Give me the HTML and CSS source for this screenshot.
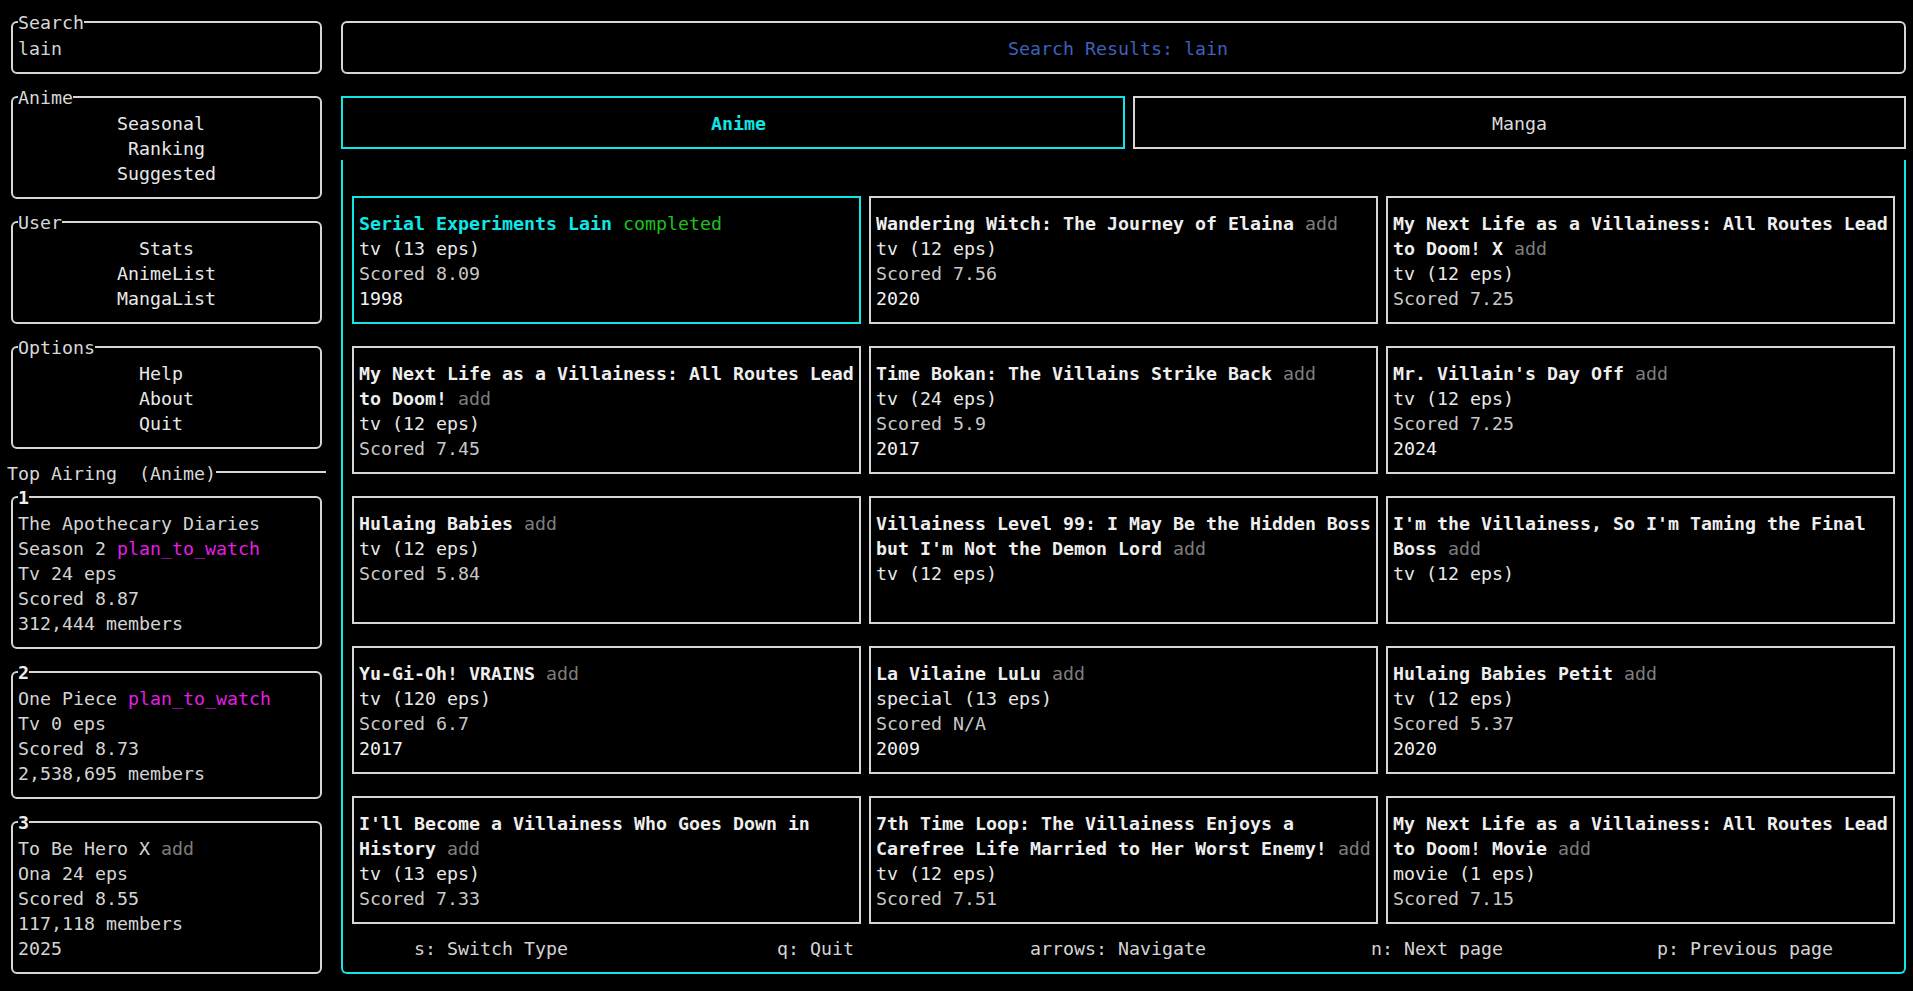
FILE: index.html
```html
<!DOCTYPE html>
<html lang="en">
<head>
<meta charset="utf-8">
<title>Search Results: lain</title>
<link rel="stylesheet" href="styles.css">
</head>
<body>
<div class="term">
  <aside class="side">
    <section class="box round">
      <span class="ttl">Search</span>
      <div class="ln">lain</div>
    </section>
    <section class="box round">
      <span class="ttl">Anime</span>
      <div class="menu"><div>Seasonal </div><div>Ranking</div><div>Suggested</div></div>
    </section>
    <section class="box round">
      <span class="ttl">User</span>
      <div class="menu"><div>Stats</div><div>AnimeList</div><div>MangaList</div></div>
    </section>
    <section class="box round">
      <span class="ttl">Options</span>
      <div class="menu"><div>Help </div><div>About</div><div>Quit </div></div>
    </section>
    <div class="sep"><span class="sep-text">Top Airing  (Anime)</span><i class="rule"></i></div>
    <section class="box round air">
      <span class="ttl b">1</span>
      <div class="ln">The Apothecary Diaries</div>
      <div class="ln">Season 2 <span class="pink">plan_to_watch</span></div>
      <div class="ln">Tv 24 eps</div>
      <div class="ln">Scored 8.87</div>
      <div class="ln">312,444 members</div>
    </section>
    <section class="box round air">
      <span class="ttl b">2</span>
      <div class="ln">One Piece <span class="pink">plan_to_watch</span></div>
      <div class="ln">Tv 0 eps</div>
      <div class="ln">Scored 8.73</div>
      <div class="ln">2,538,695 members</div>
    </section>
    <section class="box round air">
      <span class="ttl b">3</span>
      <div class="ln">To Be Hero X <span class="add">add</span></div>
      <div class="ln">Ona 24 eps</div>
      <div class="ln">Scored 8.55</div>
      <div class="ln">117,118 members</div>
      <div class="ln">2025</div>
    </section>
  </aside>

  <main class="mainc">
    <header class="box round head">
      <div class="center blue">Search Results: lain </div>
    </header>
    <nav class="tabs">
      <div class="box tab tab-anime active"> Anime</div>
      <div class="box tab tab-manga">Manga</div>
    </nav>
    <section class="panel">
      <div class="cards">
        <article class="box card sel"><div class="body">
          <div class="ln"><span class="t">Serial Experiments Lain</span> <span class="done">completed</span></div>
          <div class="ln ty">tv (13 eps)</div>
          <div class="ln sc">Scored 8.09</div>
          <div class="ln yr">1998</div>
        </div></article>
        <article class="box card"><div class="body">
          <div class="ln"><span class="t">Wandering Witch: The Journey of Elaina</span> <span class="add">add</span></div>
          <div class="ln ty">tv (12 eps)</div>
          <div class="ln sc">Scored 7.56</div>
          <div class="ln yr">2020</div>
        </div></article>
        <article class="box card"><div class="body">
          <div class="ln t">My Next Life as a Villainess: All Routes Lead</div>
          <div class="ln"><span class="t">to Doom! X</span> <span class="add">add</span></div>
          <div class="ln ty">tv (12 eps)</div>
          <div class="ln sc">Scored 7.25</div>
        </div></article>

        <article class="box card"><div class="body">
          <div class="ln t">My Next Life as a Villainess: All Routes Lead</div>
          <div class="ln"><span class="t">to Doom!</span> <span class="add">add</span></div>
          <div class="ln ty">tv (12 eps)</div>
          <div class="ln sc">Scored 7.45</div>
        </div></article>
        <article class="box card"><div class="body">
          <div class="ln"><span class="t">Time Bokan: The Villains Strike Back</span> <span class="add">add</span></div>
          <div class="ln ty">tv (24 eps)</div>
          <div class="ln sc">Scored 5.9</div>
          <div class="ln yr">2017</div>
        </div></article>
        <article class="box card"><div class="body">
          <div class="ln"><span class="t">Mr. Villain's Day Off</span> <span class="add">add</span></div>
          <div class="ln ty">tv (12 eps)</div>
          <div class="ln sc">Scored 7.25</div>
          <div class="ln yr">2024</div>
        </div></article>

        <article class="box card"><div class="body">
          <div class="ln"><span class="t">Hulaing Babies</span> <span class="add">add</span></div>
          <div class="ln ty">tv (12 eps)</div>
          <div class="ln sc">Scored 5.84</div>
        </div></article>
        <article class="box card"><div class="body">
          <div class="ln t">Villainess Level 99: I May Be the Hidden Boss</div>
          <div class="ln"><span class="t">but I'm Not the Demon Lord</span> <span class="add">add</span></div>
          <div class="ln ty">tv (12 eps)</div>
        </div></article>
        <article class="box card"><div class="body">
          <div class="ln t">I'm the Villainess, So I'm Taming the Final</div>
          <div class="ln"><span class="t">Boss</span> <span class="add">add</span></div>
          <div class="ln ty">tv (12 eps)</div>
        </div></article>

        <article class="box card"><div class="body">
          <div class="ln"><span class="t">Yu-Gi-Oh! VRAINS</span> <span class="add">add</span></div>
          <div class="ln ty">tv (120 eps)</div>
          <div class="ln sc">Scored 6.7</div>
          <div class="ln yr">2017</div>
        </div></article>
        <article class="box card"><div class="body">
          <div class="ln"><span class="t">La Vilaine LuLu</span> <span class="add">add</span></div>
          <div class="ln ty">special (13 eps)</div>
          <div class="ln sc">Scored N/A</div>
          <div class="ln yr">2009</div>
        </div></article>
        <article class="box card"><div class="body">
          <div class="ln"><span class="t">Hulaing Babies Petit</span> <span class="add">add</span></div>
          <div class="ln ty">tv (12 eps)</div>
          <div class="ln sc">Scored 5.37</div>
          <div class="ln yr">2020</div>
        </div></article>

        <article class="box card"><div class="body">
          <div class="ln t">I'll Become a Villainess Who Goes Down in</div>
          <div class="ln"><span class="t">History</span> <span class="add">add</span></div>
          <div class="ln ty">tv (13 eps)</div>
          <div class="ln sc">Scored 7.33</div>
        </div></article>
        <article class="box card"><div class="body">
          <div class="ln t">7th Time Loop: The Villainess Enjoys a</div>
          <div class="ln"><span class="t">Carefree Life Married to Her Worst Enemy!</span> <span class="add">add</span></div>
          <div class="ln ty">tv (12 eps)</div>
          <div class="ln sc">Scored 7.51</div>
        </div></article>
        <article class="box card"><div class="body">
          <div class="ln t">My Next Life as a Villainess: All Routes Lead</div>
          <div class="ln"><span class="t">to Doom! Movie</span> <span class="add">add</span></div>
          <div class="ln ty">movie (1 eps)</div>
          <div class="ln sc">Scored 7.15</div>
        </div></article>
      </div>
      <footer class="keys">
        <span class="k1">s: Switch Type</span>
        <span class="k2">q: Quit</span>
        <span class="k3">arrows: Navigate</span>
        <span class="k4">n: Next page</span>
        <span class="k5">p: Previous page</span>
      </footer>
    </section>
  </main>
</div>
</body>
</html>
```

FILE: styles.css
```css
* {
  box-sizing: border-box;
  margin: 0;
  padding: 0;
}

html,
body {
  background: #000;
}

body {
  font-family: "DejaVu Sans Mono", "Liberation Mono", monospace;
  font-size: 18.27px;
  line-height: 25px;
  color: #d4d4d4;
  width: 1913px;
  height: 991px;
  overflow: hidden;
}

.term {
  display: flex;
  gap: 11px;
  padding: 10px 0 0 7px;
}

/* ---------- generic terminal box ---------- */
.box {
  position: relative;
  margin: 11px 4px;
  border: 2px solid #d6d6d6;
  padding: 13px 5px 11px;
}

.round {
  border-radius: 6px;
}

.ttl {
  position: absolute;
  top: -14px;
  left: 5px;
  padding-top: 1px;
  background: #000;
  line-height: 25px;
  color: #d8d8d8;
}

.ttl.b {
  font-weight: bold;
  color: #ececec;
}

.ln {
  white-space: pre;
  height: 25px;
  overflow: hidden;
}

/* ---------- left column ---------- */
.side {
  width: 319px;
  flex: none;
  display: flex;
  flex-direction: column;
}

.menu div {
  white-space: pre;
  text-align: center;
  color: #e8e8e8;
}

.sep {
  display: flex;
  align-items: center;
  height: 25px;
  white-space: pre;
  color: #d8d8d8;
}

.sep-text {
  padding-top: 2px;
}

.sep .rule {
  flex: 1;
  height: 2px;
  margin-top: -2px;
  background: #d6d6d6;
}

.air .ln {
  color: #d4d4d4;
}

.pink {
  color: #e41ee4;
}

.add {
  color: #7d7d7d;
  font-weight: normal;
}

/* ---------- right column ---------- */
.mainc {
  width: 1573px;
  flex: none;
  display: flex;
  flex-direction: column;
}

.center {
  text-align: center;
  white-space: pre;
}

.blue {
  color: #3c62b9;
}

.tabs {
  display: flex;
}

.tab {
  text-align: center;
  white-space: pre;
  color: #dcdcdc;
}

.tab-anime {
  width: 792px;
}

.tab-manga {
  width: 781px;
}

.tab.active {
  border-color: #10e6e6;
  color: #10e6e6;
  font-weight: bold;
}

.panel {
  margin: 0 4px 11px;
  border: 2px solid #10e6e6;
  border-top: 0;
  border-radius: 0 0 6px 6px;
  padding: 25px 5px 12px;
}

.cards {
  display: grid;
  grid-template-columns: repeat(3, 517px);
}

.card .body {
  height: 100px;
  overflow: hidden;
}

.card.sel {
  border-color: #10e6e6;
}

.t {
  font-weight: bold;
  color: #eeeeee;
}

.sel .t {
  color: #10e6e6;
}

.done {
  color: #1cc21c;
}

.ty {
  color: #e8e8e8;
}

.sc {
  color: #c8c8c8;
}

.yr {
  color: #f2f2f2;
}

/* footer: a row of terminal cells */
.keys {
  display: grid;
  grid-template-columns: repeat(141, 11px);
  height: 25px;
  padding-top: 1px;
  white-space: pre;
  color: #d4d4d4;
}

.k1 {
  grid-column: 7 / span 14;
}

.k2 {
  grid-column: 40 / span 7;
}

.k3 {
  grid-column: 63 / span 16;
}

.k4 {
  grid-column: 94 / span 12;
}

.k5 {
  grid-column: 120 / span 16;
}
```
